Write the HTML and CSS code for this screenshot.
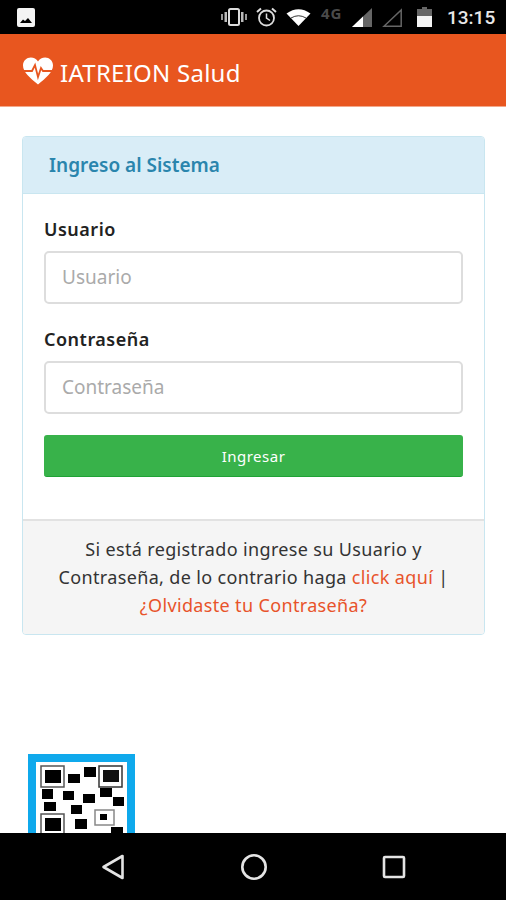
FILE: index.html
```html
<!DOCTYPE html>
<html lang="es">
<head>
    <meta charset="UTF-8">
    <meta name="viewport" content="width=device-width, initial-scale=1.0">
    <title>IATREION Salud</title>
    <link rel="stylesheet" href="styles.css">
</head>
<body>
    <div class="status-bar">
        <svg class="icon-photo" width="18" height="19" viewBox="0 0 18 19">
            <rect width="18" height="19" rx="2" fill="#f4f4f4"/>
            <path d="M3 15 L6 11.5 L8 13 L11 10 L15 15 Z" fill="#000"/>
        </svg>
        <div class="status-right">
            <svg width="26" height="18" viewBox="0 0 26 18">
                <rect x="8" y="1" width="10" height="16" rx="1.5" fill="none" stroke="#ddd" stroke-width="2"/>
                <rect x="3.5" y="4" width="2.5" height="10" fill="#bbb"/>
                <rect x="20" y="4" width="2.5" height="10" fill="#bbb"/>
                <rect x="0" y="6" width="2" height="6" fill="#999"/>
                <rect x="24" y="6" width="2" height="6" fill="#999"/>
            </svg>
            <svg width="21" height="20" viewBox="0 0 21 20">
                <circle cx="10.5" cy="11" r="7.5" fill="none" stroke="#ddd" stroke-width="1.8"/>
                <path d="M10.5 6.5 V11 L14 13.5" fill="none" stroke="#ddd" stroke-width="1.5"/>
                <path d="M1 5 L5 1.5 M20 5 L16 1.5" stroke="#ddd" stroke-width="2"/>
            </svg>
            <svg width="25" height="18" viewBox="0 0 25 18">
                <path d="M0.5 5.5 Q12.5 -3 24.5 5.5 L12.5 18 Z" fill="#fff"/>
                <path d="M5 10 Q12.5 5.5 20 10" fill="none" stroke="#000" stroke-width="0.8"/>
            </svg>
            <span class="net-label">4G</span>
            <svg class="icon-signal" width="20" height="19" viewBox="0 0 20 19">
                <path d="M0 19 L20 0 V19 Z" fill="#666"/>
                <path d="M0 19 L11 8.5 V19 Z" fill="#fff"/>
            </svg>
            <svg class="icon-signal" width="20" height="19" viewBox="0 0 20 19">
                <path d="M2 18.2 L19.2 2 V18.2 Z" fill="none" stroke="#666" stroke-width="1.5"/>
            </svg>
            <svg class="icon-battery" width="15" height="20" viewBox="0 0 15 20">
                <path d="M5 0 H10 V2 H15 V20 H0 V2 H5 Z" fill="#666"/>
                <rect y="9" width="15" height="11" fill="#f4f4f4"/>
            </svg>
            <span class="clock">13:15</span>
        </div>
    </div>

    <header class="app-header">
        <svg class="logo" width="32" height="28" viewBox="0 0 32 28">
            <path d="M16 27.5 C8 21 1 15 1 8.5 C1 3.5 4.8 0.5 8.8 0.5 C11.8 0.5 14.5 2 16 4.5 C17.5 2 20.2 0.5 23.2 0.5 C27.2 0.5 31 3.5 31 8.5 C31 15 24 21 16 27.5 Z" fill="#fff"/>
            <path d="M0 14 H10 L13 8 L16 20 L19 11 L21 14 H32" fill="none" stroke="#e8561f" stroke-width="1.8"/>
        </svg>
        <span class="brand">IATREION Salud</span>
    </header>

    <main class="content">
        <section class="panel">
            <h2 class="panel-heading">Ingreso al Sistema</h2>
            <form class="panel-body">
                <label class="field-label" for="usuario">Usuario</label>
                <input class="field-input" type="text" id="usuario" placeholder="Usuario">
                <label class="field-label" for="clave">Contraseña</label>
                <input class="field-input" type="password" id="clave" placeholder="Contraseña">
                <button type="button" class="btn-login">Ingresar</button>
            </form>
            <div class="panel-footer">
                Si está registrado ingrese su Usuario y<br>
                Contraseña, de lo contrario haga <a href="#">click aquí</a> |<br>
                <a href="#">¿Olvidaste tu Contraseña?</a>
            </div>
        </section>

        <div class="qr-box">
            <svg class="qr-code" width="91" height="91" viewBox="0 0 91 91">
                <rect x="5" y="4" width="23" height="21" fill="none" stroke="#555" stroke-width="1.5"/>
                <rect x="9" y="8" width="16" height="13" fill="#000"/>
                <rect x="63" y="4" width="23" height="21" fill="none" stroke="#333" stroke-width="1.5"/>
                <rect x="67" y="8" width="16" height="12" fill="#111"/>
                <rect x="5" y="52" width="23" height="21" fill="none" stroke="#555" stroke-width="1.5"/>
                <rect x="9" y="56" width="16" height="13" fill="#000"/>
                <rect x="32" y="12" width="12" height="9" fill="#000"/>
                <rect x="48" y="5" width="12" height="10" fill="#000"/>
                <rect x="6" y="27" width="11" height="10" fill="#000"/>
                <rect x="27" y="29" width="11" height="9" fill="#000"/>
                <rect x="47" y="32" width="12" height="9" fill="#000"/>
                <rect x="64" y="26" width="12" height="9" fill="#000"/>
                <rect x="77" y="35" width="11" height="9" fill="#000"/>
                <rect x="8" y="40" width="12" height="9" fill="#000"/>
                <rect x="35" y="43" width="11" height="9" fill="#000"/>
                <rect x="39" y="57" width="12" height="10" fill="#000"/>
                <rect x="59" y="48" width="19" height="15" fill="none" stroke="#888" stroke-width="1.5"/>
                <rect x="64" y="52" width="7" height="6" fill="#000"/>
                <rect x="75" y="65" width="12" height="10" fill="#000"/>
            </svg>
        </div>
    </main>

    <nav class="nav-bar">
        <svg width="26" height="28" viewBox="0 0 26 28">
            <path d="M22.5 3 V25 L3.5 14 Z" fill="none" stroke="#e4e4e4" stroke-width="2.6" stroke-linejoin="round"/>
        </svg>
        <svg width="28" height="28" viewBox="0 0 28 28">
            <circle cx="14" cy="14" r="11.7" fill="none" stroke="#e4e4e4" stroke-width="2.6"/>
        </svg>
        <svg width="24" height="24" viewBox="0 0 24 24">
            <rect x="2" y="2" width="20" height="20" rx="1" fill="none" stroke="#e4e4e4" stroke-width="2.6"/>
        </svg>
    </nav>
</body>
</html>
```

FILE: styles.css
```css
/* General Styles */
html, body {
    margin: 0;
    padding: 0;
}

body {
    width: 506px;
    height: 900px;
    display: flex;
    flex-direction: column;
    overflow: hidden;
    background-color: #ffffff;
    font-family: "Noto Sans", "Open Sans", sans-serif;
}

/* Android status bar */
.status-bar {
    height: 34px;
    flex: none;
    display: flex;
    align-items: center;
    justify-content: space-between;
    padding: 0 11px 0 17px;
    background-color: #000000;
}

.status-right {
    display: flex;
    align-items: center;
    gap: 9px;
}

.net-label {
    width: 23px;
    margin: 0 -2px 9px 1px;
    font-size: 15px;
    line-height: 14px;
    font-weight: 700;
    letter-spacing: 1px;
    color: #4a4a4a;
}

.icon-signal {
    margin-left: 1px;
}

.icon-battery {
    margin-left: 6px;
}

.clock {
    width: 48px;
    margin-left: 6px;
    font-family: Roboto, sans-serif;
    font-size: 19px;
    font-weight: 500;
    color: #e8e8e8;
}

/* App header */
.app-header {
    height: 73px;
    flex: none;
    display: flex;
    align-items: center;
    gap: 6px;
    padding: 2px 0 0 22px;
    background-color: #e8561f;
    border-bottom: 1px solid #f3a88a;
    box-sizing: border-box;
}

.brand {
    margin-top: 2px;
    font-size: 24px;
    letter-spacing: 0.25px;
    color: #ffffff;
}

/* Login panel */
.content {
    flex: 1;
    min-height: 0;
    overflow: hidden;
    padding: 29px 21px 0 22px;
}

.panel {
    border: 1px solid #c9e6f0;
    border-radius: 4px;
    overflow: hidden;
}

.panel-heading {
    margin: 0;
    height: 57px;
    line-height: 56px;
    padding-left: 26px;
    box-sizing: border-box;
    font-size: 19px;
    font-weight: 600;
    color: #2a85ad;
    background-color: #d9edf7;
    border-bottom: 1px solid #c9e6f0;
}

.panel-body {
    padding: 23px 21px 42px;
    display: flex;
    flex-direction: column;
}

.field-label {
    font-size: 18px;
    font-weight: 600;
    line-height: 24px;
    letter-spacing: 0.5px;
    color: #222222;
    margin-bottom: 9.5px;
}

.field-input {
    height: 53.5px;
    box-sizing: border-box;
    padding: 0 16px;
    margin-bottom: 23px;
    font-family: inherit;
    font-size: 19px;
    border: 2px solid #dddddd;
    border-radius: 5px;
}

.field-input::placeholder {
    color: #aaaaaa;
}

.btn-login {
    height: 42px;
    margin-top: -2px;
    font-family: inherit;
    font-size: 15px;
    letter-spacing: 0.5px;
    color: #ffffff;
    background-color: #38b24a;
    border: none;
    border-bottom: 1px solid #1fa235;
    border-radius: 3px;
}

.panel-footer {
    padding: 14px 0 15px;
    font-size: 18px;
    letter-spacing: 0.35px;
    line-height: 28px;
    text-align: center;
    color: #333333;
    background-color: #f5f5f5;
    border-top: 2px solid #e2e2e2;
}

.panel-footer a {
    color: #e8532a;
    text-decoration: none;
}

/* QR code, cut off by the nav bar */
.qr-box {
    width: 91px;
    height: 91px;
    margin: 119px 0 0 6px;
    background-color: #ffffff;
    border: 8px solid #0fa9ec;
}

.qr-code {
    display: block;
}

/* Android nav bar */
.nav-bar {
    height: 67px;
    flex: none;
    display: flex;
    align-items: center;
    justify-content: space-between;
    padding: 0 100px;
    background-color: #000000;
}
```
